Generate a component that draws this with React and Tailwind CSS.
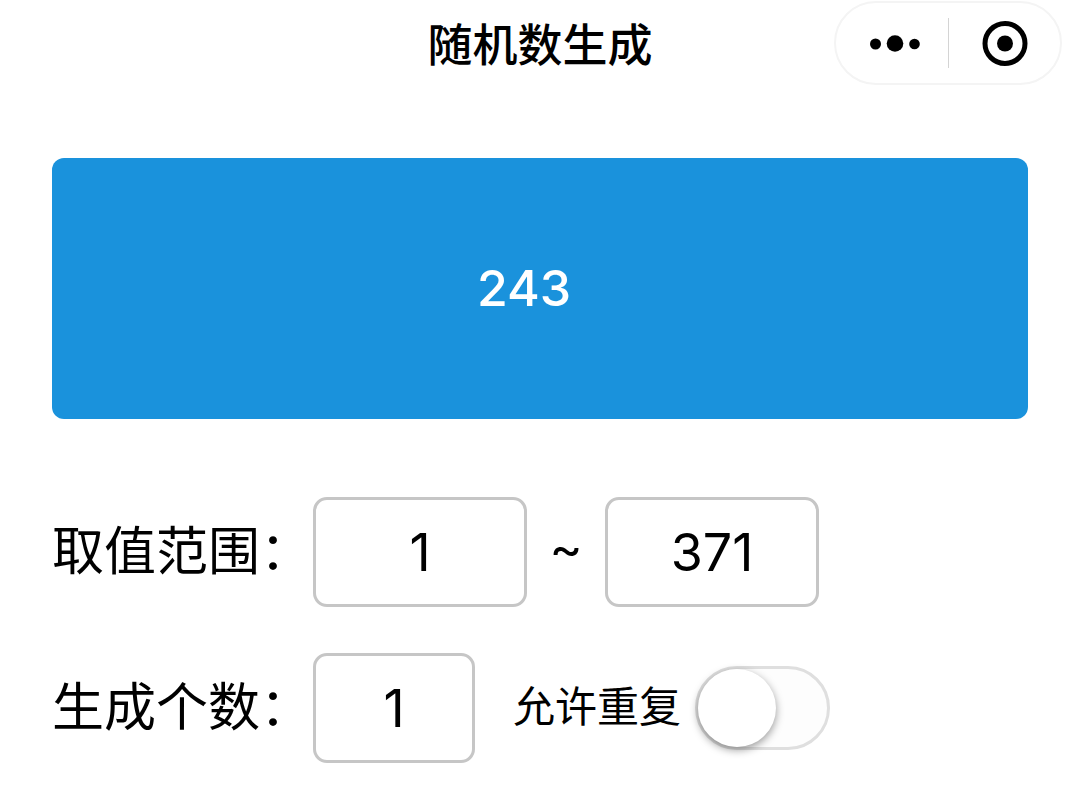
import React, { useState } from "react";

const NumberBox = ({ id, label, value, onChange, className }) => (
  <input
    id={id}
    aria-label={label}
    type="text"
    inputMode="numeric"
    value={value}
    onChange={(e) => onChange(e.target.value)}
    className={`h-[110px] rounded-[14px] border-[3px] border-[#c6c6c6] bg-white text-center font-['Inter',sans-serif] text-[52px] text-black outline-none ${className}`}
  />
);

const Header = () => (
  <header className="grid grid-cols-[1fr_auto_1fr] items-center px-[18px] pt-px">
    <h1 className="col-start-2 text-[45px] leading-[84px] font-medium text-black">
      随机数生成
    </h1>

    {/* Menu capsule */}
    <div className="flex h-[84px] w-[228px] items-center justify-self-end rounded-full border-2 border-[#f4f4f4]">
      <button type="button" aria-label="更多" className="flex h-full flex-1 items-center justify-center">
        <svg className="ml-1.5 h-[18px] w-[50px]" viewBox="0 0 50 18" fill="#000">
          <circle cx="5.5" cy="10" r="5.5" />
          <circle cx="25" cy="9.5" r="8.3" />
          <circle cx="44.5" cy="10" r="5.3" />
        </svg>
      </button>
      <div className="h-[50px] w-px bg-[#d4d4d4]" />
      <button type="button" aria-label="关闭" className="flex h-full flex-1 items-center justify-center">
        <svg className="ml-0.5 h-[46px] w-[46px]" viewBox="0 0 46 46">
          <circle cx="23" cy="23.5" r="20" fill="none" stroke="#000" strokeWidth="5" />
          <circle cx="23" cy="23.5" r="8" fill="#000" />
        </svg>
      </button>
    </div>
  </header>
);

const App = () => {
  const [min, setMin] = useState("1");
  const [max, setMax] = useState("371");
  const [count, setCount] = useState("1");
  const [repeat, setRepeat] = useState(false);
  const [result, setResult] = useState("243");

  const generate = () => {
    const low = Number(min);
    const high = Number(max);
    const total = Number(count);
    const picked = [];
    while (picked.length < total && (repeat || picked.length <= high - low)) {
      const n = low + Math.floor(Math.random() * (high - low + 1));
      if (repeat || !picked.includes(n)) picked.push(n);
    }
    setResult(picked.join(" "));
  };

  return (
    <div className="min-h-screen bg-white font-['Noto_Sans_CJK_SC',sans-serif] text-black">
      <Header />

      <main className="px-[52px] pt-[73px]">
        <button
          type="button"
          onClick={generate}
          className="h-[261px] w-full rounded-xl bg-[#1a92dc] pr-8 font-['Inter',sans-serif] text-[50px] font-medium text-white"
        >
          {result}
        </button>

        <div className="mt-[78px] flex items-center">
          <label htmlFor="min" className="mb-2 w-[261px] text-[52px] leading-[72px]">
            取值范围：
          </label>
          <NumberBox id="min" value={min} onChange={setMin} className="w-[214px]" />
          <span className="mb-2 w-[78px] text-center font-['Inter',sans-serif] text-[50px]">~</span>
          <NumberBox label="最大值" value={max} onChange={setMax} className="w-[214px]" />
        </div>

        <div className="mt-[46px] flex items-center">
          <label htmlFor="count" className="mb-2 w-[261px] text-[52px] leading-[72px]">
            生成个数：
          </label>
          <NumberBox id="count" value={count} onChange={setCount} className="w-[162px]" />
          <label htmlFor="repeat" className="mb-2 ml-[38px] text-[42px] leading-[60px]">
            允许重复
          </label>
          <input
            id="repeat"
            type="checkbox"
            role="switch"
            checked={repeat}
            onChange={(e) => setRepeat(e.target.checked)}
            className="ml-3.5 h-[84px] w-[135px] appearance-none rounded-full border-[3px] border-[#dfdfdf] bg-[#fdfdfd] before:block before:size-[78px] before:rounded-full before:bg-white before:shadow-[0_3px_8px_rgba(0,0,0,0.4)] checked:bg-[#1a92dc] checked:before:translate-x-[51px]"
          />
        </div>
      </main>
    </div>
  );
};

export default App;
